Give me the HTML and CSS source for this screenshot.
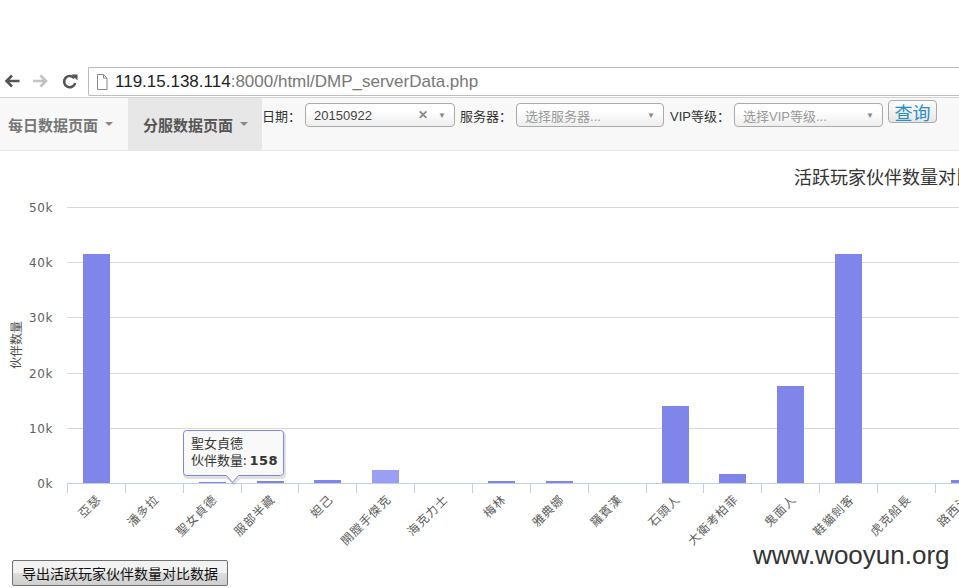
FILE: index.html
```html
<!DOCTYPE html>
<html lang="zh-CN">
<head>
  <meta charset="UTF-8" />
  <title>DMP serverData</title>
  <link rel="stylesheet" href="styles.css">
</head>
<body>
  <div class="toolbar">
    <svg class="nav-icons" width="88" height="31" viewBox="0 0 88 31">
      <!-- back -->
      <path d="M19.5 15H7 M12 9.5L6.5 15L12 20.5" fill="none" stroke="#555" stroke-width="2.6"/>
      <!-- forward -->
      <path d="M33 15H45.5 M40.5 9.5L46 15L40.5 20.5" fill="none" stroke="#c2c2c2" stroke-width="2.6"/>
      <!-- reload -->
      <path d="M74.3 12.3A5.6 5.6 0 1 0 75.2 17" fill="none" stroke="#555" stroke-width="2.6"/>
      <path d="M71.5 8.5L77.5 8.5L77.5 14.5Z" fill="#555"/>
    </svg>
    <div class="omnibox">
      <svg class="page-icon" width="12" height="16" viewBox="0 0 12 16">
        <path d="M1.5 0.5h6l3.5 3.5v11.5h-9.5z M7.5 0.5v3.5h3.5" fill="#fff" stroke="#888" stroke-width="1"/>
      </svg>
      <span class="host">119.15.138.114</span><span class="path">:8000/html/DMP_serverData.php</span>
    </div>
  </div>

  <div class="navbar">
    <div class="tab">每日数据页面 <span class="caret"></span></div>
    <div class="tab active">分服数据页面 <span class="caret"></span></div>
    <form class="filters">
      <label>日期：</label>
      <div class="select w150">
        <span class="value">20150922</span>
        <span class="clear">&#10005;</span>
        <span class="arrow">&#9660;</span>
      </div>
      <label>服务器：</label>
      <div class="select w148">
        <span class="value placeholder">选择服务器...</span>
        <span class="arrow">&#9660;</span>
      </div>
      <label>VIP等级：</label>
      <div class="select w149">
        <span class="value placeholder">选择VIP等级...</span>
        <span class="arrow">&#9660;</span>
      </div>
      <button type="button" class="query">查询</button>
    </form>
  </div>

  <div class="chart-wrap">
    <svg class="chart" width="959" height="405" viewBox="0 0 959 405">
      <text class="title" x="794" y="33">活跃玩家伙伴数量对比</text>

      <g class="grid">
        <line x1="67" y1="56.5" x2="959" y2="56.5"/>
        <line x1="67" y1="111.5" x2="959" y2="111.5"/>
        <line x1="67" y1="166.5" x2="959" y2="166.5"/>
        <line x1="67" y1="222.5" x2="959" y2="222.5"/>
        <line x1="67" y1="277.5" x2="959" y2="277.5"/>
      </g>

      <g class="ylabels">
        <text x="53" y="61">50k</text>
        <text x="53" y="116">40k</text>
        <text x="53" y="171">30k</text>
        <text x="53" y="227">20k</text>
        <text x="53" y="282">10k</text>
        <text x="53" y="337">0k</text>
      </g>
      <text class="ytitle" transform="translate(21 194) rotate(-90)">伙伴数量</text>

      <g class="bars">
        <rect x="83" y="103" width="27" height="229"/>
        <rect x="199" y="331" width="27" height="1"/>
        <rect x="257" y="330" width="27" height="2"/>
        <rect x="314" y="329" width="27" height="3"/>
        <rect class="hover" x="372" y="319" width="27" height="13"/>
        <rect x="488" y="330" width="27" height="2"/>
        <rect x="546" y="330" width="27" height="2"/>
        <rect x="662" y="255" width="27" height="77"/>
        <rect x="719" y="323" width="27" height="9"/>
        <rect x="777" y="235" width="27" height="97"/>
        <rect x="835" y="103" width="27" height="229"/>
        <rect x="951" y="329" width="27" height="3"/>
      </g>

      <g class="axis">
        <line x1="67" y1="332.5" x2="959" y2="332.5"/>
        <line x1="67.5" y1="332" x2="67.5" y2="342"/>
        <line x1="125.5" y1="332" x2="125.5" y2="342"/>
        <line x1="183.5" y1="332" x2="183.5" y2="342"/>
        <line x1="241.5" y1="332" x2="241.5" y2="342"/>
        <line x1="298.5" y1="332" x2="298.5" y2="342"/>
        <line x1="356.5" y1="332" x2="356.5" y2="342"/>
        <line x1="414.5" y1="332" x2="414.5" y2="342"/>
        <line x1="472.5" y1="332" x2="472.5" y2="342"/>
        <line x1="530.5" y1="332" x2="530.5" y2="342"/>
        <line x1="588.5" y1="332" x2="588.5" y2="342"/>
        <line x1="646.5" y1="332" x2="646.5" y2="342"/>
        <line x1="703.5" y1="332" x2="703.5" y2="342"/>
        <line x1="761.5" y1="332" x2="761.5" y2="342"/>
        <line x1="819.5" y1="332" x2="819.5" y2="342"/>
        <line x1="877.5" y1="332" x2="877.5" y2="342"/>
        <line x1="935.5" y1="332" x2="935.5" y2="342"/>
      </g>

      <g class="xlabels">
        <text transform="translate(102 349) rotate(-45)">亞瑟</text>
        <text transform="translate(160 349) rotate(-45)">潘多拉</text>
        <text transform="translate(218 349) rotate(-45)">聖女貞德</text>
        <text transform="translate(276 349) rotate(-45)">服部半藏</text>
        <text transform="translate(334 349) rotate(-45)">妲己</text>
        <text transform="translate(392 349) rotate(-45)">開膛手傑克</text>
        <text transform="translate(449 349) rotate(-45)">海克力士</text>
        <text transform="translate(507 349) rotate(-45)">梅林</text>
        <text transform="translate(565 349) rotate(-45)">雅典娜</text>
        <text transform="translate(623 349) rotate(-45)">羅賓漢</text>
        <text transform="translate(681 349) rotate(-45)">石頭人</text>
        <text transform="translate(739 349) rotate(-45)">大衛考柏菲</text>
        <text transform="translate(797 349) rotate(-45)">鬼面人</text>
        <text transform="translate(855 349) rotate(-45)">鞋貓劍客</text>
        <text transform="translate(912 349) rotate(-45)">虎克船長</text>
        <text transform="translate(970 349) rotate(-45)">路西法</text>
      </g>

      <g class="tooltip">
        <path class="tip-shadow" d="M187.5 281.5h94a3 3 0 0 1 3 3v39a3 3 0 0 1 -3 3h-42l-6 6l-6 -6h-40a3 3 0 0 1 -3 -3v-39a3 3 0 0 1 3 -3z"/>
        <path class="tip-box" d="M186.5 279.5h94a3 3 0 0 1 3 3v39a3 3 0 0 1 -3 3h-42l-6 7l-6 -7h-40a3 3 0 0 1 -3 -3v-39a3 3 0 0 1 3 -3z"/>
        <text x="191" y="297">聖女貞德</text>
        <text x="191" y="314">伙伴数量: <tspan class="num">158</tspan></text>
      </g>
    </svg>
    <div class="watermark">www.wooyun.org</div>
  </div>

  <div class="export">
    <button type="button" class="export-btn">导出活跃玩家伙伴数量对比数据</button>
  </div>
</body>
</html>
```

FILE: styles.css
```css
html, body {
  margin: 0;
  padding: 0;
  overflow: hidden;
}
body {
  font-family: "Liberation Sans", Arial, "Noto Sans CJK SC", sans-serif;
  background: #fff;
  width: 959px;
  height: 588px;
  padding-top: 66px;
  box-sizing: border-box;
}
.toolbar {
  height: 32px;
  display: flex;
  align-items: flex-start;
  background: #fff;
  border-bottom: 1px solid #d2d2d2;
  box-sizing: border-box;
}
.nav-icons {
  display: block;
  flex: none;
}
.omnibox {
  flex: 1;
  height: 29px;
  margin-top: 1px;
  border: 1px solid #bcbcbc;
  border-right: none;
  border-radius: 2px 0 0 2px;
  display: flex;
  align-items: center;
  box-sizing: border-box;
  font-size: 17px;
}
.page-icon {
  margin: 0 7px 0 7px;
}
.host {
  color: #222;
}
.path {
  color: #777;
}

.navbar {
  height: 53px;
  display: flex;
  background: #f8f8f8;
  border-bottom: 1px solid #e7e7e7;
  box-sizing: border-box;
  font-family: "Liberation Sans", "Noto Sans CJK SC", sans-serif;
}
.tab {
  width: 120px;
  padding-left: 8px;
  display: flex;
  align-items: center;
  font-size: 15px;
  font-weight: bold;
  color: #777;
  white-space: pre;
}
.tab.active {
  width: 119px;
  background: #e7e7e7;
  color: #555;
  padding-left: 15px;
}
.caret {
  display: inline-block;
  width: 0;
  height: 0;
  margin-left: 3px;
  border-top: 4px solid #888;
  border-left: 4px solid transparent;
  border-right: 4px solid transparent;
}
.filters {
  display: flex;
  align-items: flex-start;
  margin: 0;
  padding-top: 5px;
}
.filters label {
  font-size: 13px;
  color: #333;
  margin-top: 3px;
  margin-right: 4px;
  white-space: nowrap;
}
.select {
  height: 24px;
  border: 1px solid #aaa;
  border-radius: 4px;
  background: linear-gradient(#fff 30%, #eee);
  box-sizing: border-box;
  display: flex;
  align-items: center;
  margin-right: 5px;
  font-size: 13px;
}
.w150 { width: 150px; }
.w148 { width: 148px; margin-right: 6px; }
.w149 { width: 149px; }
.value {
  flex: 1;
  padding-left: 8px;
  color: #444;
}
.placeholder {
  color: #999;
}
.clear {
  font-size: 12px;
  font-weight: bold;
  color: #888;
  margin-right: 10px;
}
.arrow {
  font-size: 8px;
  color: #888;
  margin-right: 8px;
}
.query {
  height: 23px;
  width: 49px;
  margin-top: -3px;
  padding: 0;
  border: 1px solid #aaa;
  border-radius: 4px;
  background: linear-gradient(#fdfdfd, #e6e6e6);
  color: #2a8ec0;
  font-size: 18px;
  font-family: "Noto Sans CJK SC", sans-serif;
  line-height: 20px;
}

.chart-wrap {
  position: relative;
  height: 405px;
}
.chart {
  display: block;
  font-family: "Liberation Sans", "Noto Sans CJK TC", sans-serif;
}
.title {
  font-size: 18px;
  fill: #333;
  font-family: "Noto Sans CJK SC", sans-serif;
}
.grid line {
  stroke: #d8d8d8;
  stroke-width: 1;
}
.ylabels text {
  font-size: 12px;
  fill: #606060;
  text-anchor: end;
  letter-spacing: 0.6px;
  font-family: "DejaVu Sans", sans-serif;
}
.ytitle {
  font-size: 12px;
  fill: #4d4d4d;
  text-anchor: middle;
  font-family: "Noto Sans CJK SC", sans-serif;
}
.bars rect {
  fill: #8085e9;
}
.bars rect.hover {
  fill: #9a9ff5;
}
.axis line {
  stroke: #c0d0e0;
  stroke-width: 1;
}
.xlabels text {
  font-size: 12px;
  fill: #606060;
  text-anchor: end;
  letter-spacing: 1px;
}
.tip-shadow {
  fill: none;
  stroke: rgba(0,0,0,0.12);
  stroke-width: 3;
}
.tip-box {
  fill: rgba(249,249,249,0.95);
  stroke: #8085e9;
  stroke-width: 1;
}
.tooltip text {
  font-size: 13px;
  fill: #333;
  font-family: "Noto Sans CJK SC", sans-serif;
}
.tooltip .num {
  font-weight: bold;
  font-family: "DejaVu Sans", sans-serif;
  letter-spacing: 0.5px;
}
.watermark {
  position: absolute;
  left: 753px;
  top: 389px;
  font-size: 26px;
  color: #333;
  font-family: "Liberation Sans", Arial, sans-serif;
}

.export {
  padding: 4px 0 0 12px;
}
.export-btn {
  height: 26px;
  width: 216px;
  padding: 0;
  border: 1px solid #707070;
  border-radius: 2px;
  background: linear-gradient(#f2f2f2 50%, #dedede 50%, #cfcfcf);
  font-size: 14px;
  color: #111;
  font-family: "Noto Sans CJK SC", sans-serif;
}
```
